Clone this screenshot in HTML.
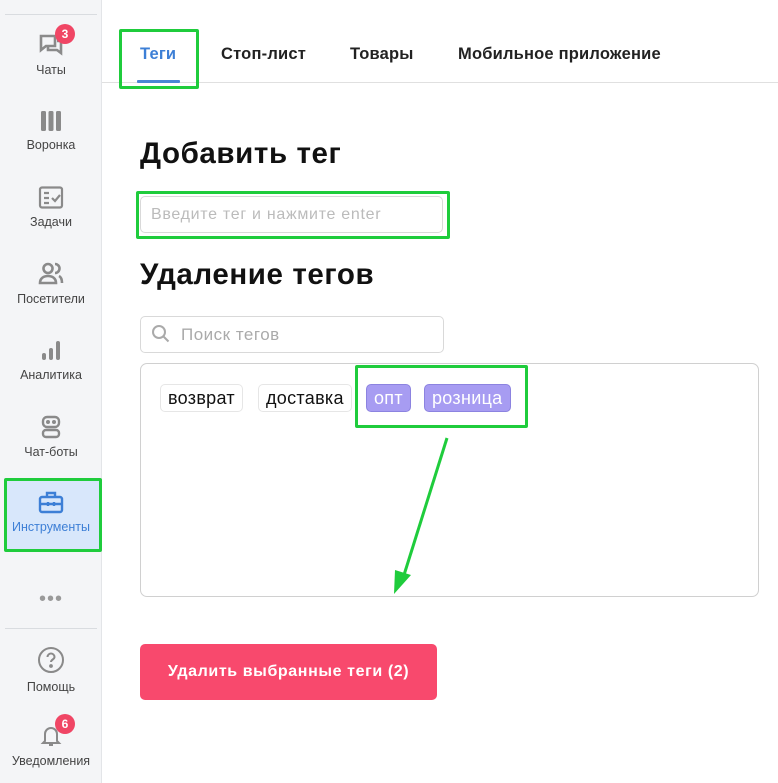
<!DOCTYPE html>
<html><head><meta charset="utf-8"><style>
*{box-sizing:border-box;margin:0;padding:0}
body{width:778px;height:783px;position:relative;background:#fff;font-family:"Liberation Sans",sans-serif;overflow:hidden}
.a{position:absolute}
.sb{left:0;top:0;width:102px;height:783px;background:#f4f5f7;border-right:1px solid #e3e5e8}
.it{position:absolute;left:0;width:102px;text-align:center;font-size:12.5px;color:#444}
.it svg{display:block;margin:0 auto 6px}
.badge{position:absolute;width:20px;height:20px;border-radius:10px;background:#f04665;color:#fff;font-size:12px;font-weight:bold;line-height:20px;text-align:center}
.g{position:absolute;border:3px solid #1fcc3c;border-radius:2px}
.tab{position:absolute;top:45px;font-size:16.5px;color:#222;font-weight:bold;letter-spacing:0.2px}
.h{position:absolute;left:140px;font-size:29.5px;color:#111;font-weight:bold;letter-spacing:0.6px}
.tag{position:absolute;top:384px;height:28px;line-height:26px;border:1px solid #e6e6e6;border-radius:5px;font-size:18px;padding:0 7px;color:#111;letter-spacing:0.3px}
.sel{background:#a79cf2;border-color:#8c83e0;color:#fff}
</style></head><body>
<div class="a sb"></div>
<div class="a" style="left:5px;top:14px;width:92px;height:1px;background:#d9dce0"></div>
<div class="it" style="top:33px"><svg width="26" height="24" viewBox="0 0 26 24" fill="none" stroke="#8a8a8a" stroke-width="2.6"><path d="M3 3h14v10H8l-5 4z"/><path d="M19 8h4v12l-4-3h-9v-3"/></svg>Чаты</div>
<div class="badge" style="left:55px;top:24px">3</div>
<div class="it" style="top:110px"><svg width="24" height="22" viewBox="0 0 24 22" fill="#8a8a8a"><rect x="2" y="1" width="5" height="20" rx="1.5"/><rect x="9.5" y="1" width="5" height="20" rx="1.5"/><rect x="17" y="1" width="5" height="20" rx="1.5"/></svg>Воронка</div>
<div class="it" style="top:186px"><svg width="26" height="23" viewBox="0 0 26 23" fill="none" stroke="#8a8a8a" stroke-width="2.2"><rect x="2" y="1.5" width="22" height="20" rx="2"/><path d="M6 7h5M6 12h5M6 17h5M14 12l3 3 5-6"/></svg>Задачи</div>
<div class="it" style="top:262px"><svg width="28" height="24" viewBox="0 0 28 24" fill="none" stroke="#8a8a8a" stroke-width="2.6"><circle cx="11" cy="6.5" r="4.5"/><path d="M3 21c0-5 4-7 8-7s8 2 8 7z"/><path d="M18 2a4.5 4.5 0 010 9M22 14c2 1 3 3 3 7"/></svg>Посетители</div>
<div class="it" style="top:339px"><svg width="24" height="23" viewBox="0 0 24 23" fill="#8a8a8a"><rect x="3" y="14" width="4" height="7" rx="2"/><rect x="10" y="9" width="4" height="12" rx="2"/><rect x="17" y="2" width="4" height="19" rx="2"/></svg>Аналитика</div>
<div class="it" style="top:415px"><svg width="24" height="24" viewBox="0 0 24 24" fill="none" stroke="#8a8a8a" stroke-width="2.4"><rect x="4" y="2" width="16" height="10" rx="4"/><rect x="4" y="15" width="16" height="7" rx="3"/><circle cx="9" cy="7" r=".8" fill="#8a8a8a"/><circle cx="15" cy="7" r=".8" fill="#8a8a8a"/></svg>Чат-боты</div>
<div class="a" style="left:6px;top:480px;width:93px;height:69px;background:#d8e7fb"></div>
<div class="it" style="top:491px;color:#3d7fd6"><svg width="26" height="23" viewBox="0 0 26 23" fill="none" stroke="#3d7fd6" stroke-width="2.4"><rect x="2" y="6" width="22" height="15" rx="2"/><path d="M9 6V2h8v4M2 13h22M10 11v4M16 11v4"/></svg>Инструменты</div>
<div class="g" style="left:4px;top:478px;width:98px;height:74px"></div>
<div class="it" style="top:588px;font-size:20px;color:#9a9a9a;letter-spacing:1px">•••</div>
<div class="a" style="left:5px;top:628px;width:92px;height:1px;background:#d9dce0"></div>
<div class="it" style="top:646px"><svg width="28" height="28" viewBox="0 0 28 28" fill="none" stroke="#8a8a8a" stroke-width="2"><circle cx="14" cy="14" r="12"/><path d="M10.5 11a3.5 3.5 0 117 0c0 2.5-3.5 2.5-3.5 5"/><circle cx="14" cy="20" r=".9" fill="#8a8a8a"/></svg>Помощь</div>
<div class="it" style="top:723px"><svg width="24" height="25" viewBox="0 0 24 25" fill="none" stroke="#8a8a8a" stroke-width="2"><path d="M6 18V11a6 6 0 0112 0v7l2 2H4z"/><path d="M10 22h4"/></svg>Уведомления</div>
<div class="badge" style="left:55px;top:714px">6</div>

<div class="tab" style="left:140px;color:#3d7fd6">Теги</div>
<div class="tab" style="left:221px">Стоп-лист</div>
<div class="tab" style="left:350px">Товары</div>
<div class="tab" style="left:458px">Мобильное приложение</div>
<div class="a" style="left:102px;top:82px;width:676px;height:1px;background:#e0e0e0"></div>
<div class="a" style="left:137px;top:80px;width:43px;height:3px;background:#4a86d4;border-radius:1px"></div>
<div class="g" style="left:119px;top:29px;width:80px;height:60px"></div>

<div class="h" style="top:137px">Добавить тег</div>
<div class="a" style="left:140px;top:196px;width:303px;height:37px;border:1px solid #d9d9d9;border-radius:5px;font-size:16px;letter-spacing:0.7px;color:#bbb;padding:9px 0 0 10px">Введите тег и нажмите enter</div>
<div class="g" style="left:136px;top:191px;width:314px;height:48px"></div>

<div class="h" style="top:258px">Удаление тегов</div>
<div class="a" style="left:140px;top:316px;width:304px;height:37px;border:1px solid #d9d9d9;border-radius:5px;font-size:17px;letter-spacing:0.5px;color:#aaa;padding:8px 0 0 40px">Поиск тегов</div>
<svg class="a" style="left:151px;top:324px" width="20" height="20" viewBox="0 0 20 20" fill="none" stroke="#aaa" stroke-width="2"><circle cx="8" cy="8" r="6"/><path d="M12.5 12.5l5 5"/></svg>
<div class="a" style="left:140px;top:363px;width:619px;height:234px;border:1px solid #d0d0d0;border-radius:7px"></div>
<div class="tag" style="left:160px">возврат</div>
<div class="tag" style="left:258px">доставка</div>
<div class="tag sel" style="left:366px">опт</div>
<div class="tag sel" style="left:424px">розница</div>
<div class="g" style="left:355px;top:365px;width:173px;height:63px"></div>
<svg class="a" style="left:0;top:0" width="778" height="783"><path d="M447 438L404 575" stroke="#1fcc3c" stroke-width="3" fill="none"/><path d="M394 594l1-24 16 5z" fill="#1fcc3c"/></svg>

<div class="a" style="left:140px;top:644px;width:297px;height:56px;background:#f8496d;border-radius:5px;color:#fff;font-size:16px;letter-spacing:0.6px;font-weight:bold;text-align:center;line-height:56px">Удалить выбранные теги (2)</div>
</body></html>
